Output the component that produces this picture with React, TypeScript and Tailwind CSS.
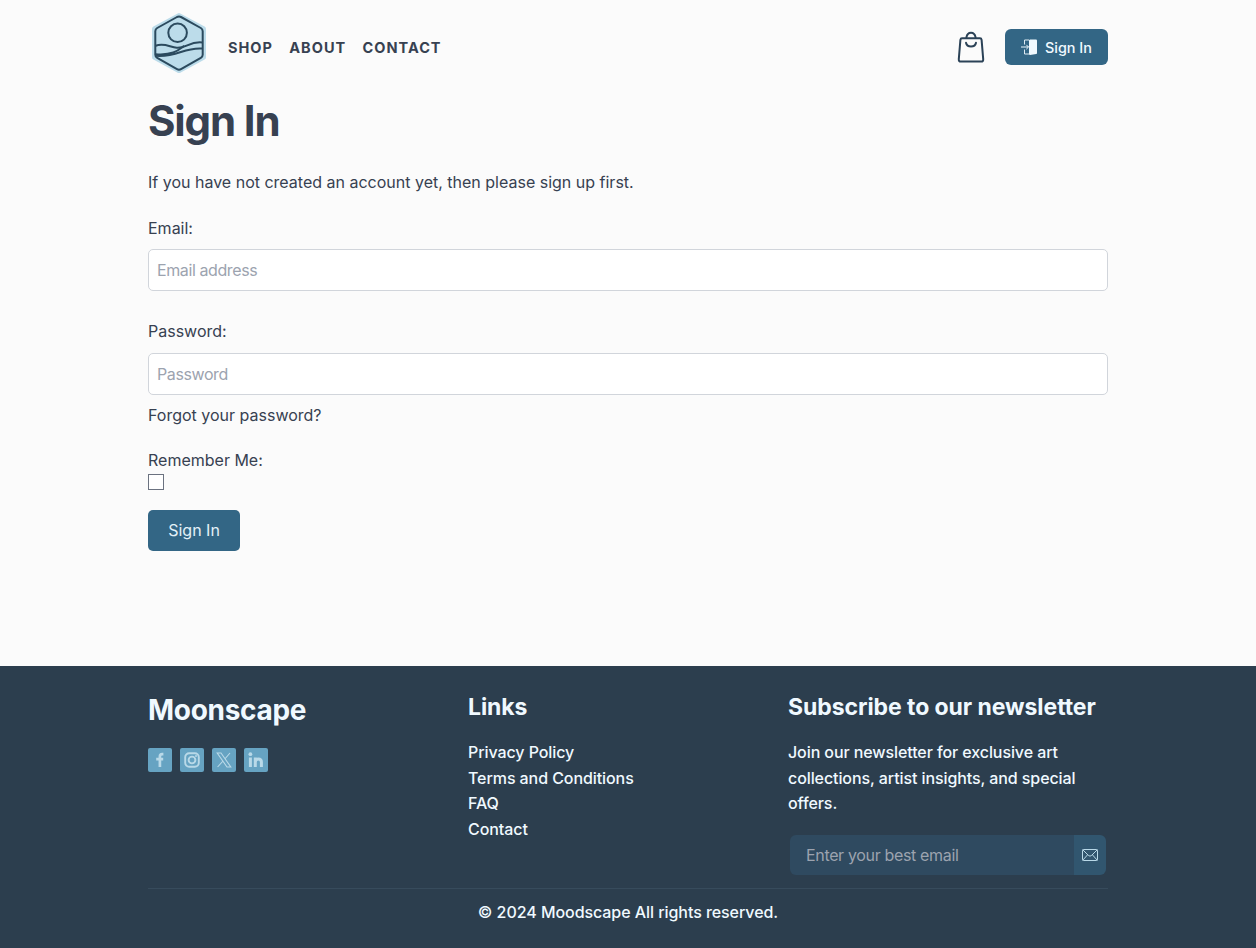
import type { ReactNode } from "react";

function Logo() {
  return (
    <svg className="h-[60px] w-[56px]" viewBox="0 0 56 60" fill="none" stroke="#2b4a5e" strokeWidth="2" strokeLinejoin="round">
      <path d="M28 2.8 L52.3 15.8 V44.2 L28 57.4 L3.7 44.2 V15.8 Z" fill="#bcdcea" stroke="#bcdcea" strokeWidth="5.4" />
      <path d="M26 4 Q28 2.9 30 4 L49.8 15 Q51.7 16.2 51.7 18.2 V41.8 Q51.7 43.8 49.8 44.9 L30 56.1 Q28 57.2 26 56.1 L6.2 44.9 Q4.3 43.8 4.3 41.8 V18.2 Q4.3 16.2 6.2 15 Z" />
      <circle cx="26.6" cy="19.8" r="9.3" />
      <path d="M4.6 32.8 C13 29.6 18.5 34 25.8 34.8 C35 35.5 38.5 28.2 51 29.4" />
      <path d="M4.6 41.2 C22 42.5 27 37.5 33 32.8" />
      <path d="M4.6 42.8 C27 44.5 32 34.2 51.4 35.6" />
    </svg>
  );
}

function Bag() {
  return (
    <svg className="h-8 w-7" viewBox="0 0 28 32" fill="none" stroke="#2b4257" strokeWidth="2" strokeLinecap="round" strokeLinejoin="round">
      <path d="M5 7.2 H23 Q24.4 7.2 24.6 8.8 L26.2 28.2 Q26.4 30.6 24.2 30.6 H3.8 Q1.6 30.6 1.8 28.2 L3.4 8.8 Q3.6 7.2 5 7.2 Z" />
      <path d="M9.4 6.4 C10 3 11.6 1.7 14 1.7 S18 3 18.6 6.4" />
      <path d="M9 11.8 C10 16.8 18 16.8 19 11.8" />
    </svg>
  );
}

function Door() {
  return (
    <svg className="h-[18px] w-4" viewBox="0 0 16 18" fill="none" stroke="#f0f9ff">
      <path d="M8 2.2 L9 1.4 H15 Q16 1.4 16 2.4 V15 Q16 15.8 15.2 16 L9 17 L8 16.6 Z" fill="#f0f9ff" stroke="none" />
      <path d="M3.5 6.5 V2 H8 M3.5 11.5 V16 H8" strokeWidth=".9" />
      <path d="M0 9 H7.5 M5.3 6.8 L7.5 9 L5.3 11.2" strokeWidth="1" />
    </svg>
  );
}

function Social({ children }: { children: ReactNode }) {
  return (
    <a className="block size-6 overflow-hidden rounded-[2px] bg-[#66a3c2]">
      <svg className="size-6" viewBox="0 0 24 24" fill="none" stroke="#b9d9e8">
        {children}
      </svg>
    </a>
  );
}

function Field({ label, placeholder, type, labelClass }: { label: string; placeholder: string; type: string; labelClass: string }) {
  return (
    <label className="block">
      <span className={`block h-[26px] leading-[26px] ${labelClass}`}>{label}</span>
      <input
        type={type}
        placeholder={placeholder}
        className="block h-[42px] w-full rounded-[5px] border border-[#d1d5db] bg-white px-2 tracking-[-0.4px] placeholder:text-[#9ca3af]"
      />
    </label>
  );
}

export default function App() {
  return (
    <div className="flex h-[948px] flex-col overflow-hidden bg-[#fbfbfb] font-['Inter',sans-serif] text-base text-[#374151]">
      <div className="mx-auto w-[960px] flex-1">
        <header className="flex h-[94px] items-center">
          <div className="mb-2 pl-[3px]">
            <Logo />
          </div>
          <nav className="mt-[2px] ml-[21px] flex gap-[16.4px] text-[14.5px] font-bold tracking-[1px]">
            <a>SHOP</a>
            <a>ABOUT</a>
            <a>CONTACT</a>
          </nav>
          <div className="ml-auto flex items-center gap-5">
            <Bag />
            <a className="flex h-9 w-[103px] items-center gap-2 rounded-md bg-[#336685] pl-4 text-[14.4px] font-medium text-[#f0f9ff]">
              <Door />
              <span className="pt-px">Sign In</span>
            </a>
          </div>
        </header>
        <main>
          <h1 className="h-[54px] text-[42px] leading-[54px] font-bold tracking-[-1.15px]">Sign In</h1>
          <p className="mt-[21px] h-[26px] leading-[26px]">If you have not created an account yet, then please sign up first.</p>
          <form>
            <div className="mt-5">
              <Field label="Email:" placeholder="Email address" type="email" labelClass="mb-2" />
            </div>
            <div className="mt-[27px]">
              <Field label="Password:" placeholder="Password" type="password" labelClass="mb-[9px]" />
            </div>
            <a className="mt-[7px] block h-[26px] leading-[26px]">Forgot your password?</a>
            <label className="mt-[19px] block">
              <span className="block h-[26px] leading-[26px]">Remember Me:</span>
              <input type="checkbox" className="mt-px block size-4 appearance-none border border-[#6b7280] bg-white" />
            </label>
            <button type="button" className="mt-5 block h-[41px] w-[92px] rounded-[5px] bg-[#336685] pb-px text-[#e4f1f8]">
              Sign In
            </button>
          </form>
        </main>
      </div>
      <footer className="h-[282px] bg-[#2c3e4e] text-[#f0f9ff]">
        <div className="mx-auto w-[960px]">
          <div className="grid h-[222px] grid-cols-3 pt-6">
            <section>
              <h2 className="h-10 text-[28px] leading-10 font-bold tracking-[-0.3px]">Moonscape</h2>
              <div className="mt-[18px] flex gap-2">
                <Social>
                  <path d="M15.4 6.1 H14.2 Q11.9 6.1 11.9 8.4 V19 M8.2 11.2 H15.2" strokeWidth="2.7" />
                </Social>
                <Social>
                  <rect x="5.2" y="5.2" width="13.6" height="13.6" rx="4" strokeWidth="1.9" />
                  <circle cx="12" cy="12" r="3.4" strokeWidth="1.9" />
                  <circle cx="16" cy="8" r="1" fill="#b9d9e8" stroke="none" />
                </Social>
                <Social>
                  <path d="M5.2 5 H9 L18.8 19 H15 Z M18 5 L12.8 11 M11 13 L5.6 19" strokeWidth="1.1" />
                </Social>
                <Social>
                  <path d="M6.4 9.5 V19 M11.3 9.5 V19 M11.3 14 Q11.3 11 14.3 11 Q17.4 11 17.4 14 V19" strokeWidth="3" />
                  <circle cx="6.4" cy="6.2" r="1.9" fill="#b9d9e8" stroke="none" />
                </Social>
              </div>
            </section>
            <section>
              <h3 className="h-[34px] text-[23px] leading-[34px] font-bold tracking-[-0.07px]">Links</h3>
              <ul className="mt-4 leading-[25.6px] font-medium tracking-[-0.08px]">
                <li>Privacy Policy</li>
                <li>Terms and Conditions</li>
                <li>FAQ</li>
                <li>Contact</li>
              </ul>
            </section>
            <section>
              <h3 className="h-[34px] text-[23px] leading-[34px] font-bold tracking-[-0.07px] whitespace-nowrap">Subscribe to our newsletter</h3>
              <p className="mt-4 leading-[25.6px] font-medium tracking-[-0.09px] whitespace-nowrap">
                Join our newsletter for exclusive art<br />collections, artist insights, and special<br />offers.
              </p>
              <div className="mt-[18px] ml-[2px] flex h-10 w-[316px] overflow-hidden rounded-md">
                <input
                  placeholder="Enter your best email"
                  className="w-[284px] bg-[#2f4a60] px-4 tracking-[-0.34px] placeholder:text-[#9ca3af]"
                />
                <button type="button" className="flex w-8 items-center justify-center bg-[#31566f]">
                  <svg className="h-3 w-4" viewBox="0 0 16 12" fill="none" stroke="#b9d9e8" strokeLinejoin="round">
                    <rect x=".5" y=".5" width="15" height="11" rx=".8" />
                    <path d="M.8 .8 L6.5 6.5 Q8 7.8 9.5 6.5 L15.2 .8 M.8 11.2 L5.6 5.8 M15.2 11.2 L10.4 5.8" />
                  </svg>
                </button>
              </div>
            </section>
          </div>
          <div className="border-t border-[#374b5c] pt-[11px] text-center leading-[25.6px] font-medium tracking-[-0.06px]">© 2024 Moodscape All rights reserved.</div>
        </div>
      </footer>
    </div>
  );
}
